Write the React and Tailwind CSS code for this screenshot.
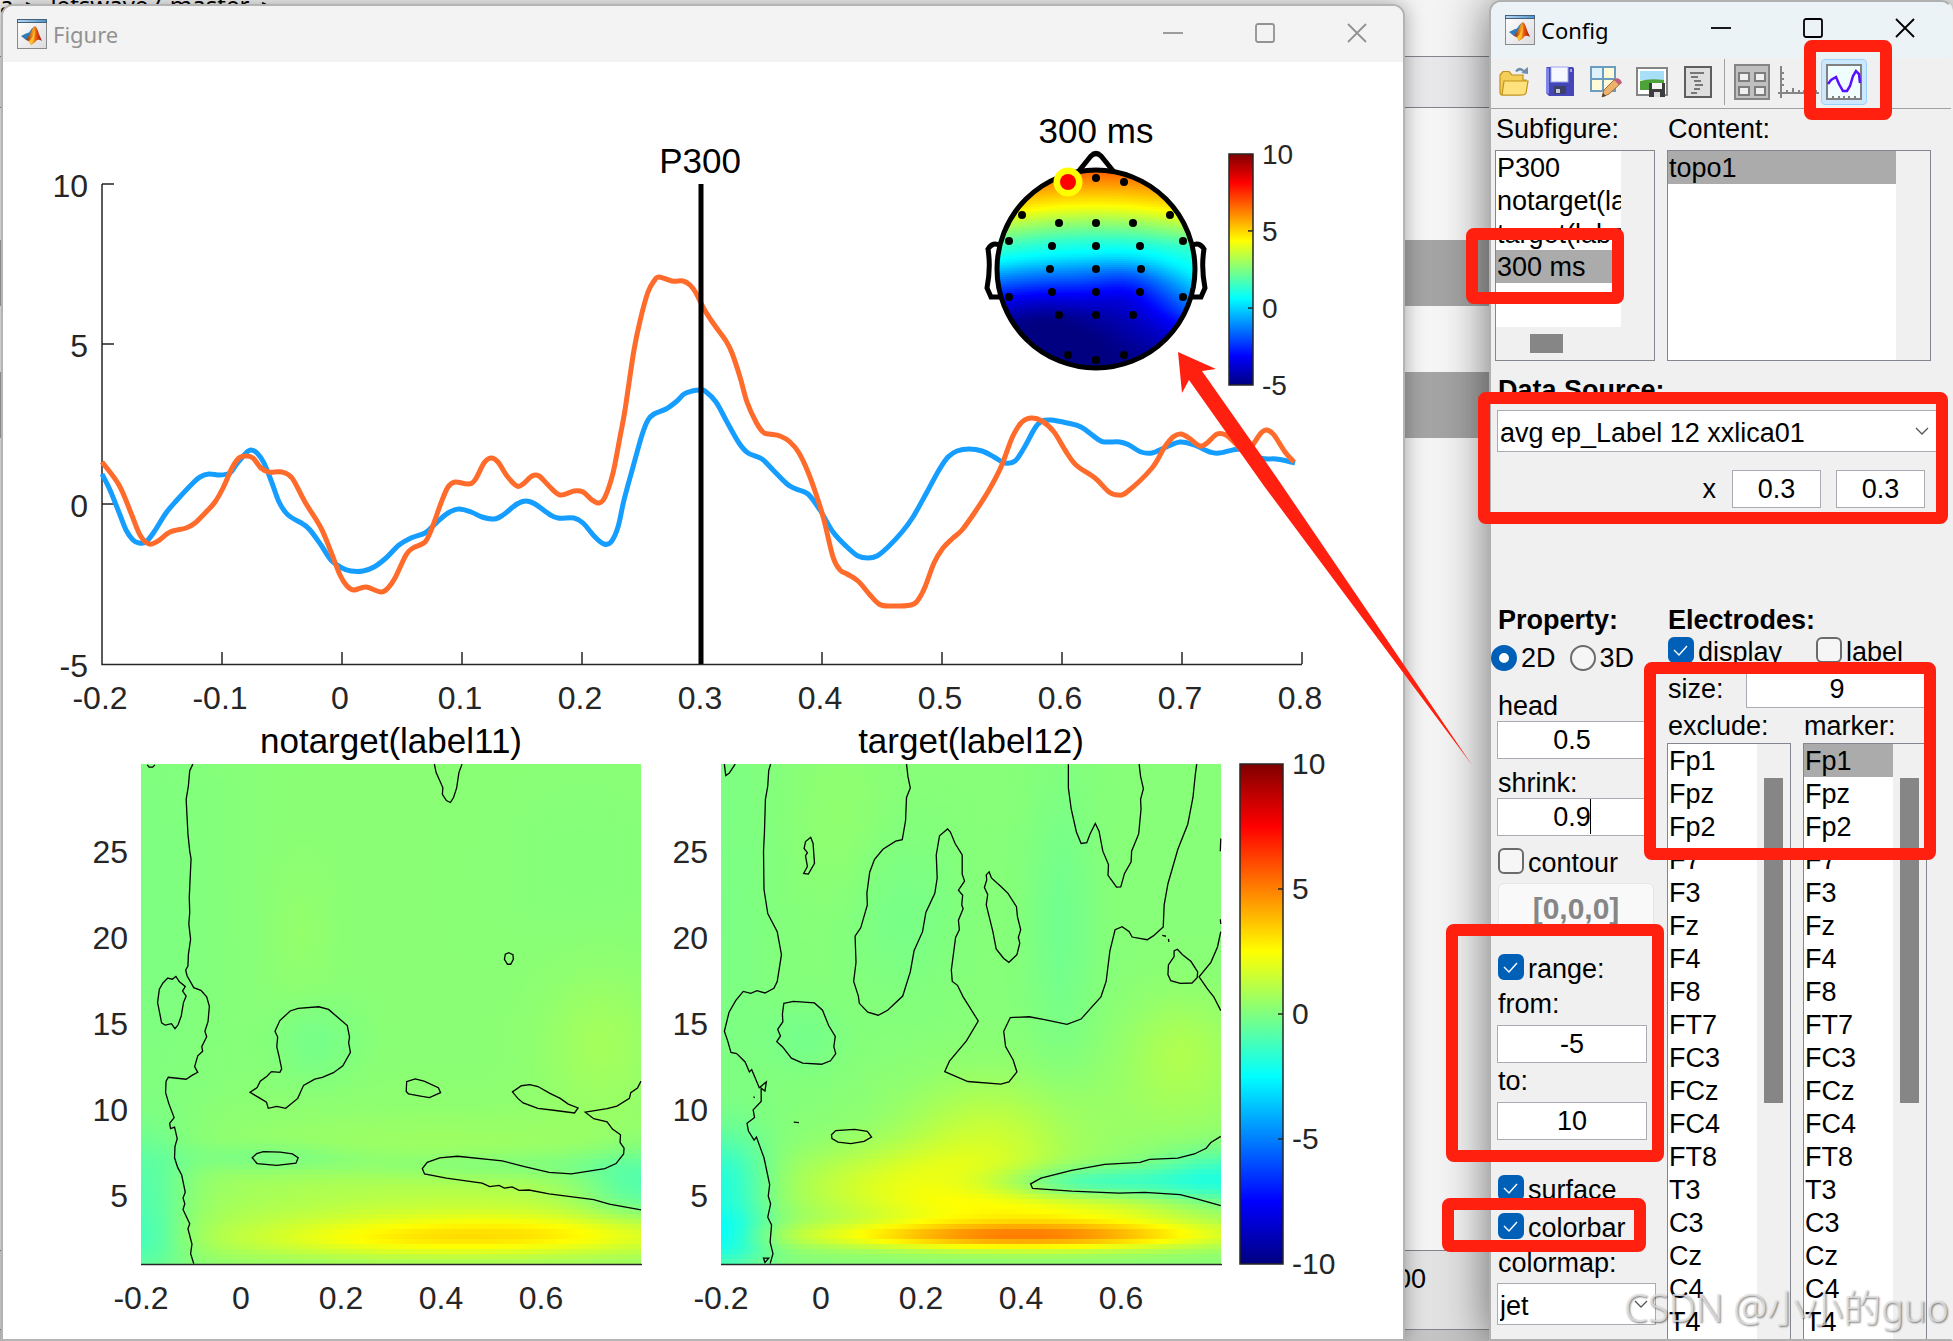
import { useState } from 'react'

const ARIAL = "'Liberation Sans', Arial, sans-serif"

const ELECTRODES = ['Fp1', 'Fpz', 'Fp2', 'F7', 'F3', 'Fz', 'F4', 'F8', 'FT7', 'FC3', 'FCz', 'FC4', 'FT8', 'T3', 'C3', 'Cz', 'C4', 'T4', 'TP7', 'CP3', 'CPz', 'CP4']

const NOTARGET_ERP = '102,474 110,490 120,515 126,530 133,540 139,543 146,542 154,532 166,513 177,500 193,483 200,477 209,474 220,475 230,473 236,465 246,453 251,450 257,453 264,463 272,483 279,502 288,515 303,524 310,530 321,545 331,560 342,568 351,571 363,571 374,567 386,558 399,545 411,538 425,533 436,523 448,513 459,509 471,512 482,517 494,519 503,515 517,504 526,501 535,504 549,514 558,518 574,518 583,523 595,537 604,544 611,542 618,527 624,500 633,467 642,435 648,420 654,414 666,409 677,401 684,394 692,391 700,390 705,391 716,402 727,422 739,443 748,453 762,459 773,470 787,484 796,489 808,494 820,510 833,532 847,547 858,556 868,558 877,556 888,547 902,532 913,517 927,492 939,470 948,457 957,451 969,449 982,451 994,457 1005,463 1015,461 1024,448 1035,428 1042,421 1051,420 1067,423 1081,427 1099,440 1106,442 1120,442 1129,445 1141,452 1152,453 1164,448 1180,442 1194,445 1210,452 1219,453 1242,449 1258,458 1276,459 1287,461 1295,463'

const TARGET_ERP = '102,462 119,485 131,513 140,535 149,544 158,541 170,532 186,528 195,523 207,511 215,502 223,488 232,468 239,458 246,456 253,458 261,468 269,472 282,472 292,478 305,502 321,528 331,552 340,575 347,586 354,590 366,587 381,592 388,588 395,578 406,555 413,548 425,542 432,528 441,503 448,487 455,482 468,484 475,480 484,463 491,458 498,462 507,476 517,486 523,484 532,476 539,476 549,486 560,495 574,491 583,492 592,500 599,503 605,497 613,473 620,437 625,410 634,350 641,317 648,292 654,281 659,277 672,281 683,281 690,285 696,293 704,309 713,323 726,341 732,353 740,377 747,402 756,422 763,432 769,434 780,436 790,442 799,453 808,472 817,497 824,520 833,557 840,570 847,574 858,581 870,595 879,604 888,606 911,605 918,600 925,587 934,563 943,548 953,538 962,530 975,512 989,490 1001,467 1012,438 1021,423 1031,418 1042,421 1054,432 1065,450 1076,465 1095,478 1109,492 1118,495 1127,492 1152,468 1164,448 1173,437 1181,434 1189,438 1200,446 1207,443 1217,434 1226,435 1235,443 1244,452 1251,447 1261,433 1267,430 1274,435 1285,452 1294,462'

// zero-level contours of the two time-frequency maps
const NOTARGET_CONTOURS = [
  'M432,63 L425,80 422,120 417,155 419,200 421,245 425,290 428,310 426,360 424,410 425,450 423,480 427,520 422,560 421,590 416,600 419,615 434,646 450,653 463,670 469,695 466,735 459,760 463,774 452,800 454,812 443,824 436,852 443,867 430,875 417,885 377,880 372,890 371,920 378,948 390,985 380,1000 382,1014 391,1010 397,1040 392,1060 391,1090 398,1115 407,1135 415,1180 410,1195 414,1210 410,1225 425,1262 421,1275 430,1315 427,1340 434,1366',
  'M330,65 L334,71 342,71 347,65',
  'M376,621 L386,624 394,617 402,631 415,643 409,655 417,668 411,685 406,720 399,743 392,753 384,740 370,744 362,738 359,720 353,685 357,650 365,634 Z',
  'M973,63 L977,85 992,124 991,142 1000,158 1009,163 1016,150 1023,125 1028,85 1035,63',
  'M1140,555 L1149,560 1150,572 1144,585 1137,585 1130,572 1132,559 Z',
  'M560,919 L576,907 583,890 598,877 608,865 627,867 631,858 625,825 620,800 622,775 616,760 627,732 650,707 668,700 714,696 736,703 778,745 783,775 781,790 785,815 768,850 747,868 722,880 705,885 680,901 667,935 640,961 620,956 601,961 597,945 580,933 Z',
  'M911,891 L930,884 950,890 982,907 987,920 962,933 942,929 915,923 910,917 Z',
  'M1148,918 L1168,902 1187,899 1205,904 1232,922 1255,935 1273,950 1295,960 1287,973 1240,966 1205,961 1172,947 1160,935 Z',
  'M565,1090 L575,1079 590,1074 628,1075 655,1080 668,1090 663,1104 620,1110 576,1105 Z',
  'M1436,890 L1428,908 1413,920 1410,935 1382,955 1360,962 1311,971 1330,988 1360,996 1372,1015 1390,1030 1389,1050 1398,1065 1397,1080 1380,1105 1355,1118 1280,1132 1230,1128 1175,1113 1125,1098 1025,1086 985,1090 957,1102 946,1118 951,1132 1000,1143 1080,1156 1097,1165 1118,1162 1130,1169 1147,1166 1163,1175 1185,1174 1230,1184 1330,1199 1365,1211 1436,1226',
]

const TARGET_CONTOURS = [
  'M94,63 L97,93 104,87 117,63',
  'M192,63 L188,80 186,120 181,155 179,240 177,290 178,390 186,453 206,500 215,560 206,630 199,648 180,660 163,654 150,661 134,656 118,680 104,710 94,760 101,785 108,815 120,818 138,840 147,866 152,860 168,907 183,892 180,916 172,908 172,943 155,965 158,985 142,1000 145,1020 157,1044 162,1036 178,1090 190,1160 187,1190 192,1210 186,1245 194,1265 191,1310 197,1340 191,1366',
  'M177,1352 L188,1352 180,1363 Z',
  'M277,254 L282,270 285,322 272,350 262,348 270,330 266,302 270,294 263,283 266,265 Z',
  'M480,63 L483,95 488,125 480,150 478,210 471,260 457,264 430,285 412,312 402,345 396,400 397,430 383,490 371,512 373,580 368,630 378,668 380,687 398,710 420,718 440,705 472,668 488,605 496,550 514,500 521,450 540,400 545,360 543,300 550,250 567,232 573,240 583,270 598,300 598,350 603,368 590,392 599,405 597,430 600,440 590,470 592,495 584,515 575,600 577,630 588,640 600,670 632,733 607,785 571,838 561,865 610,891 680,898 697,892 714,866 706,835 690,800 686,760 700,724 740,722 775,730 820,742 850,728 870,700 892,670 903,630 911,550 922,495 937,487 952,500 958,514 990,521 1003,511 1024,488 1026,430 1034,375 1055,285 1076,220 1087,150 1092,90 1095,63',
  'M655,344 L660,360 680,382 695,400 713,435 715,460 722,495 717,515 720,530 714,560 697,580 686,570 670,545 663,500 655,460 649,430 652,403 645,385 650,365 649,352 Z',
  'M823,63 L823,125 829,180 840,240 850,270 862,268 869,245 880,218 888,238 896,290 908,325 907,353 916,368 925,384 934,383 942,348 956,318 957,290 972,245 977,180 976,155 982,127 976,95 973,63',
  'M1054,546 L1065,560 1083,578 1097,605 1096,620 1085,634 1060,635 1040,628 1034,612 1035,587 1047,565 1047,550 Z',
  'M1146,500 L1139,540 1125,580 1100,618 1118,650 1131,670 1146,706',
  'M220,687 L240,682 285,686 302,705 315,745 329,773 326,800 330,818 319,837 300,846 260,843 236,830 217,800 205,787 213,772 207,755 218,735 217,715 Z',
  'M321,1030 L330,1019 370,1016 397,1021 406,1036 390,1047 362,1053 335,1049 322,1040 Z',
  'M1146,1034 L1125,1050 1115,1065 1090,1080 1055,1091 995,1094 975,1102 900,1107 830,1123 765,1143 743,1158 747,1170 830,1177 930,1182 985,1180 1060,1186 1095,1197 1146,1215',
  'M1022,510 L1030,512 M1035,519 L1036,527 M241,997 L252,998 M156,930 L158,934 M1146,257 L1145,290 M1145,468 L1146,480',
]

// gaussian bumps: [cx, cy, sx, sy, amplitude], in plot units
const NOTARGET_BUMPS = [
  [345, 473, 130, 11, 1.1], [380, 468, 190, 18, 1.3], [300, 430, 200, 46, 0.8], [220, 480, 100, 10, 0.4],
  [0, 425, 32, 40, -1.2], [0, 478, 32, 22, -1.1], [500, 425, 45, 26, -1.5], [350, 402, 110, 11, -0.7], [130, 394, 60, 10, -0.6],
  [460, 280, 40, 50, 0.5], [175, 278, 28, 28, -0.4], [160, 170, 20, 50, 0.2], [0, 150, 60, 200, -0.25], [440, 100, 60, 60, -0.1],
]

const TARGET_BUMPS = [
  [295, 472, 135, 9, 3.6], [340, 453, 115, 20, 2], [190, 420, 85, 26, 1.6], [265, 375, 60, 40, 1.2],
  [0, 420, 32, 34, -2], [0, 475, 32, 20, -2.2], [500, 415, 45, 20, -1.8], [370, 419, 75, 11, -1.9],
  [460, 285, 38, 38, 0.7], [340, 160, 22, 100, -0.45], [180, 150, 40, 60, -0.3], [85, 275, 26, 24, -0.35],
  [120, 60, 30, 60, 0.2], [0, 150, 40, 200, -0.25], [450, 350, 80, 40, 0.3],
]

const HEAD_DOTS = [
  [1096, 178], [1124, 182], [1022, 215], [1170, 215], [1059, 223], [1096, 223], [1133, 223], [1009, 241], [1183, 241],
  [1052, 246], [1096, 246], [1140, 246], [1050, 269], [1096, 269], [1141, 269], [1052, 292], [1096, 292], [1140, 292],
  [1009, 297], [1183, 297], [1059, 315], [1096, 315], [1133, 315], [1068, 355], [1096, 360], [1124, 355],
]

const clamp = (v) => Math.max(0, Math.min(1, v))

function jet(t) {
  const s = clamp(t) * 4
  const [r, g, b] = [3, 2, 1].map((c) => Math.round(255 * clamp(1.5 - Math.abs(s - c))))
  return `rgb(${r},${g},${b})`
}

const bumpSum = (bumps, x, y) =>
  bumps.reduce((sum, [cx, cy, sx, sy, a]) => sum + a * Math.exp(-((x - cx) ** 2) / (2 * sx * sx) - ((y - cy) ** 2) / (2 * sy * sy)), 0)

const notargetField = (x, y) => (10.2 + bumpSum(NOTARGET_BUMPS, x, y)) / 20
const targetField = (x, y) => (10.15 + bumpSum(TARGET_BUMPS, x, y)) / 20

const HEAD_PROFILE = [[0, 0.8], [16, 0.73], [36, 0.64], [54, 0.53], [72, 0.43], [89, 0.36], [104, 0.27], [120, 0.19], [134, 0.13], [150, 0.08], [175, 0.03], [205, 0], [240, 0]]
const HEAD_BUMPS = [[132, 118, 24, 20, -0.05], [50, 155, 45, 28, -0.07]]

function headField(x, y) {
  const dx = (x - 100) / 100
  const bend = 10 + 24 * clamp((y - 80) / 60) * (dx > 0 ? 1 : -0.3)
  const yy = Math.max(0, y - bend * dx * dx + 2)
  const i = Math.max(1, HEAD_PROFILE.findIndex(([py]) => py >= yy))
  const [y0, v0] = HEAD_PROFILE[i - 1]
  const [y1, v1] = HEAD_PROFILE[i]
  return v0 + ((v1 - v0) * (yy - y0)) / (y1 - y0) + bumpSum(HEAD_BUMPS, x, y)
}

// smooth path through the sample points
function curve(points) {
  const p = points.split(' ').map((s) => s.split(',').map(Number))
  let d = `M${p[0]}`
  for (let i = 0; i < p.length - 1; i++) {
    const [a, b, c, e] = [p[i - 1] || p[i], p[i], p[i + 1], p[i + 2] || p[i + 1]]
    d += ` C${b[0] + (c[0] - a[0]) / 6},${b[1] + (c[1] - a[1]) / 6} ${c[0] - (e[0] - b[0]) / 6},${c[1] - (e[1] - b[1]) / 6} ${c}`
  }
  return d
}

function FieldMap({ id, x, y, width, height, rowHeight, field, clipPath }) {
  const rows = Array.from({ length: Math.ceil(height / rowHeight) }, (_, i) => i)
  const stops = Array.from({ length: 26 }, (_, i) => i / 25)
  return (
    <g clipPath={clipPath} shapeRendering="crispEdges">
      {rows.map((row) => (
        <g key={row}>
          <linearGradient id={`${id}-${row}`}>
            {stops.map((s) => (
              <stop key={s} offset={s} stopColor={jet(field(s * width, (row + 0.5) * rowHeight))} />
            ))}
          </linearGradient>
          <rect x={x} y={y + row * rowHeight} width={width} height={rowHeight} fill={`url(#${id}-${row})`} />
        </g>
      ))}
    </g>
  )
}

function Colorbar({ x, y, width, height, ticks, fontSize }) {
  return (
    <g>
      <rect x={x} y={y} width={width} height={height} fill="url(#jet)" stroke="#262626" strokeWidth="1.5" />
      {ticks.map(([label, f]) => (
        <g key={label}>
          {f > 0 && f < 1 && <path d={`M${x + width - 5},${y + f * height}h5`} stroke="#262626" strokeWidth="1.5" />}
          <text x={x + width + 9} y={y + f * height + 10} fontSize={fontSize} fill="#262626">{label}</text>
        </g>
      ))}
    </g>
  )
}

function TimeFrequency({ id, x, title, field, contours, contourTransform }) {
  return (
    <g>
      <text x={x + 250} y="753" fontSize="35" textAnchor="middle">{title}</text>
      <FieldMap id={id} x={x} y={764} width={500} height={500} rowHeight={5} field={field} />
      <g transform={contourTransform} fill="none" stroke="#000" strokeWidth="1.3">
        {contours.map((d) => <path key={d} d={d} vectorEffect="non-scaling-stroke" />)}
      </g>
      <path d={`M${x},1264.5h501`} stroke="#262626" strokeWidth="1.5" />
      <g fontSize="32" fill="#262626">
        {[25, 20, 15, 10, 5].map((hz, i) => (
          <text key={hz} x={x - 13} y={863 + i * 86} textAnchor="end">{hz}</text>
        ))}
        {['-0.2', '0', '0.2', '0.4', '0.6'].map((t, i) => (
          <text key={t} x={x + i * 100} y="1309" textAnchor="middle">{t}</text>
        ))}
      </g>
    </g>
  )
}

function Topography() {
  const ear = 'M1000,246 Q993,241 988,249 Q991,268 987,288 L991,297 L1000,297'
  return (
    <g>
      <text x="1096" y="143" fontSize="35" textAnchor="middle">300 ms</text>
      <clipPath id="scalp"><circle cx="1096" cy="269" r="99" /></clipPath>
      <FieldMap id="topo" x={996} y={169} width={200} height={202} rowHeight={2} field={headField} clipPath="url(#scalp)" />
      <g fill="none" stroke="#000" strokeWidth="5">
        <circle cx="1096" cy="269" r="99" />
        <path d="M1078,172 L1091,156 Q1096,151 1101,156 L1114,172" />
        <path d={ear} />
        <path d={ear} transform="translate(2192 0) scale(-1 1)" />
      </g>
      {HEAD_DOTS.map(([cx, cy]) => <circle key={`${cx}-${cy}`} cx={cx} cy={cy} r="4" />)}
      <circle cx="1068" cy="182" r="14.5" fill="#ff0" />
      <circle cx="1068" cy="182" r="8" fill="#f00" />
    </g>
  )
}

function FigurePlots() {
  return (
    <svg viewBox="3 62 1400 1279" className="relative z-10 block w-full overflow-visible" fontFamily={ARIAL}>
      <linearGradient id="jet" x1="0" y1="1" x2="0" y2="0">
        {[0, 0.125, 0.375, 0.625, 0.875, 1].map((t) => <stop key={t} offset={t} stopColor={jet(t)} />)}
      </linearGradient>

      {/* ERP axes */}
      <path
        d={`M102,184V664.5H1302 M102,184h12 M102,344h12 M102,504h12 ${Array.from({ length: 10 }, (_, i) => `M${222 + i * 120},664v-12`).join(' ')}`}
        fill="none" stroke="#262626" strokeWidth="1.5"
      />
      <g fontSize="32" fill="#262626">
        {['10', '5', '0', '-5'].map((v, i) => (
          <text key={v} x="88" y={197 + i * 160} textAnchor="end">{v}</text>
        ))}
        {['-0.2', '-0.1', '0', '0.1', '0.2', '0.3', '0.4', '0.5', '0.6', '0.7', '0.8'].map((t, i) => (
          <text key={t} x={100 + i * 120} y="709" textAnchor="middle">{t}</text>
        ))}
      </g>
      <g fill="none" strokeWidth="5" strokeLinejoin="round">
        <path d={curve(NOTARGET_ERP)} stroke="#159dff" />
        <path d={curve(TARGET_ERP)} stroke="#ff6b2b" />
        <path d="M701,184V664" stroke="#000" />
      </g>
      <text x="700" y="173" fontSize="35" textAnchor="middle">P300</text>

      <Topography />
      <Colorbar x={1229} y={154} width={24} height={231} fontSize={28} ticks={[['10', 0], ['5', 0.333], ['0', 0.667], ['-5', 1]]} />

      <TimeFrequency id="notarget" x={141} title="notarget(label11)" field={notargetField}
        contours={NOTARGET_CONTOURS} contourTransform="matrix(0.4464 0 0 0.3833 0 740)" />
      <TimeFrequency id="target" x={721} title="target(label12)" field={targetField}
        contours={TARGET_CONTOURS} contourTransform="matrix(0.4719 0 0 0.3833 680 740)" />
      <Colorbar x={1240} y={764} width={43} height={500} fontSize={30} ticks={[['10', 0], ['5', 0.25], ['0', 0.5], ['-5', 0.75], ['-10', 1]]} />

      <path d="M1178,352 L1216,369 L1202,371 L1277,478 L1472,765 L1264,486 L1189,380 L1182,393 Z" fill="#ff2010" />
    </svg>
  )
}

function MatlabIcon() {
  return (
    <svg viewBox="0 0 30 30" className="size-[30px] shrink-0">
      <defs>
        <linearGradient id="mlPage" x2="1" y2="1"><stop offset="0" stopColor="#fff" /><stop offset="1" stopColor="#dcdce0" /></linearGradient>
        <linearGradient id="mlBar"><stop offset="0" stopColor="#b9d9f2" /><stop offset="1" stopColor="#4f93cc" /></linearGradient>
        <linearGradient id="mlPeak"><stop offset="0" stopColor="#8d1b10" /><stop offset=".45" stopColor="#f4a01f" /><stop offset=".7" stopColor="#e0420f" /><stop offset="1" stopColor="#9c1d0c" /></linearGradient>
      </defs>
      <rect x=".5" y=".5" width="29" height="29" fill="url(#mlPage)" stroke="#8a8a8a" />
      <rect x=".5" y=".5" width="29" height="3" fill="url(#mlBar)" stroke="#44617c" />
      <path d="M4 17 L9 14.500 L12 13.500 Q15 9 17 7.500 L14 17 L9 21 Z" fill="#2f7cb8" />
      <path d="M9 21 Q12 17 14 13 Q16 8 18 7 Q20 8 22 15 L25 22 Q22 20 20 21 Q17 25 14 26 Q13 22 9 21 Z" fill="url(#mlPeak)" />
      <path d="M12 22 Q16 20 18 9 Q18 19 15 25 L14 26 Z" fill="#ffc02e" />
    </svg>
  )
}

function WindowButtons({ stroke }) {
  const shapes = [
    ['Minimize', <path key="m" d="M0 10H20" />],
    ['Maximize', <rect key="r" x="1" y="1" width="18" height="18" rx="2" />],
    ['Close', <path key="c" d="M1 1L19 19M19 1L1 19" />],
  ]
  return (
    <div className="ml-auto flex h-full pb-0.5">
      {shapes.map(([label, shape]) => (
        <button key={label} aria-label={label} className="flex h-full w-[92px] items-center justify-center">
          <svg viewBox="0 0 20 20" className="size-5" fill="none" stroke={stroke} strokeWidth="1.8">{shape}</svg>
        </button>
      ))}
    </div>
  )
}

const TOOLS = {
  open: (
    <svg viewBox="0 0 32 32" className="size-8">
      <path d="M17 5 Q21 -1 26 4 L30 1 V8 L23 7 L25 6 Q22 3 19 6 Z" fill="#6f8fae" />
      <path d="M2 9 L5 5.500 H11 L14 9 H25 V14 H28 L26 27 Q25 29 22 29 H4 Q2 29 2 26 Z" fill="#f3cf58" stroke="#c2921c" strokeWidth="1.200" />
      <path d="M6 15 H30 L28 27 Q27 29 24 29 H4 Z" fill="#ffe27d" stroke="#c2921c" strokeWidth="1.200" />
    </svg>
  ),
  save: (
    <svg viewBox="0 0 32 32" className="size-8">
      <path d="M3 1 H28 Q30 1 30 3 V30 H5 L2 27 V2 Z" fill="#4345b8" />
      <path d="M2 2 H5 V28 L2 27 Z" fill="#7d85e6" />
      <rect x="7" y="1" width="17" height="15" fill="#f6f8ff" stroke="#9fa6ea" />
      <rect x="10" y="20" width="12" height="8" fill="#3c3f66" />
      <path d="M12 23 H16 V27 H12 Z" fill="#c9cbd3" />
      <rect x="26" y="3" width="2" height="3" fill="#9fa6ea" />
    </svg>
  ),
  edit: (
    <svg viewBox="0 0 32 32" className="size-8">
      <rect x="1" y="1" width="24" height="24" fill="#fffbd8" stroke="#6c9cc0" strokeWidth="2" />
      <path d="M2 2 H13 V13 H2 Z" fill="#dff1fb" />
      <path d="M13 1 V25 M1 13 H25" stroke="#6c9cc0" strokeWidth="2" />
      <path d="M12 31 L14 24 L25 13 L30 18 L19 28 Z" fill="#edb36c" stroke="#a46a33" />
      <path d="M24 14 L27 12 Q31 13 32 17 L29 19 Z" fill="#bf5f80" />
      <path d="M12 31 L13 27 L16 30 Z" fill="#444" />
    </svg>
  ),
  export: (
    <svg viewBox="0 0 32 32" className="size-8">
      <rect x="1" y="2" width="30" height="27" fill="#fff" stroke="#858585" strokeWidth="2" />
      <rect x="4" y="5" width="24" height="9" fill="#a8def8" />
      <path d="M4 15 Q14 12 28 14 V24 H4 Z" fill="#4da23a" />
      <rect x="13" y="17" width="16" height="14" fill="#3d3d3d" />
      <rect x="16" y="17" width="10" height="6" fill="#f4f4f4" />
      <rect x="18" y="26" width="6" height="5" fill="#dcdcdc" />
    </svg>
  ),
  script: (
    <svg viewBox="0 0 32 32" className="size-8">
      <rect x="3" y="1" width="26" height="30" fill="#dedede" stroke="#5e5e5e" strokeWidth="2" />
      <path d="M8 7H22 M9 11H16 M12 15H19 M13 19H21 M12 23H18 M9 27H15" stroke="#777" strokeWidth="2.200" />
    </svg>
  ),
  grid: (
    <svg viewBox="0 0 36 36" className="size-9">
      <rect x="1" y="1" width="34" height="34" fill="#c0c0c0" stroke="#858585" strokeWidth="2" />
      <g fill="#f0f0f0" stroke="#7d7d7d" strokeWidth="2">
        <path d="M5 9h10v8h-10z M21 9h10v8h-10z M5 23h10v8h-10z M21 23h10v8h-10z" />
      </g>
    </svg>
  ),
  axes: (
    <svg viewBox="0 0 42 36" className="h-9 w-[42px]" fill="none" stroke="#858585" strokeWidth="2">
      <path d="M4 2V34 M1 29H42 M4 9h3 M4 15h3 M4 21h3 M10 26v3 M16 24v5 M22 26v3 M27 26v3 M33 26v3 M39 26v3" />
    </svg>
  ),
  wave: (
    <svg viewBox="0 0 36 36" className="size-9">
      <rect x="1" y="1" width="34" height="34" fill="#effdff" stroke="#808080" strokeWidth="2" />
      <path d="M7 32v3 M13 32v3 M18 32v3 M23 32v3 M29 32v3" stroke="#808080" strokeWidth="2" />
      <path d="M2 20 L5 16 L10 13 L13 20 L17 27 H21 L24 22 L27 12 L30 7 L33 10 L34 19" fill="none" stroke="#5a10ff" strokeWidth="2.500" />
    </svg>
  ),
}

function Tool({ name, active }) {
  return (
    <button aria-label={name}
      className={`flex h-[46px] w-[46px] shrink-0 items-center justify-center rounded-sm ${active ? 'border border-[#99d1ff] bg-[#cce8ff]' : ''}`}>
      {TOOLS[name]}
    </button>
  )
}

const inputCls = 'block h-[38px] w-full rounded-none border border-[#ababb3] bg-white text-center text-[27px] leading-8'
const markCls = 'size-[26px] shrink-0 appearance-none border-2 border-[#6b6b6b] bg-[#f6f6f6]'

function Check({ label, checked, onChange }) {
  return (
    <label className="flex h-7 items-center gap-1">
      <span className="relative flex">
        <input type="checkbox" checked={checked} onChange={onChange}
          className={`${markCls} rounded-md checked:border-[#0060b8] checked:bg-[#0060b8]`} />
        {checked && (
          <svg viewBox="0 0 26 26" className="pointer-events-none absolute inset-0" fill="none" stroke="#fff" strokeWidth="1.4">
            <path d="M6 13 L11 18 L19 9" />
          </svg>
        )}
      </span>
      <span className="pt-1 leading-7">{label}</span>
    </label>
  )
}

function Radio({ label, checked, onChange }) {
  return (
    <label className="flex h-8 items-center gap-1">
      <input type="radio" name="dimension" checked={checked} onChange={onChange}
        className={`${markCls} rounded-full checked:border-8 checked:border-[#0060b8] checked:bg-white`} />
      <span className="leading-8">{label}</span>
    </label>
  )
}

function Select({ label, options, className }) {
  return (
    <div className={`relative ${className}`}>
      <select aria-label={label} className="block h-[42px] w-full appearance-none rounded-none border border-[#ababb3] bg-white pt-1 pl-0.5 text-[27px] leading-8">
        {options.map((o) => <option key={o}>{o}</option>)}
      </select>
      <svg viewBox="0 0 14 8" className="pointer-events-none absolute top-[17px] right-2 h-2 w-[14px]" fill="none" stroke="#555" strokeWidth="1.300">
        <path d="M1 1L7 7L13 1" />
      </svg>
    </div>
  )
}

function ListBox({ label, items, selected, gutter, className, children }) {
  return (
    <div className={`relative flex overflow-hidden border border-[#828790] ${className}`}>
      <ul role="listbox" aria-label={label} className="min-w-0 flex-1 overflow-hidden bg-white whitespace-nowrap">
        {items.map((item) => (
          <li key={item} role="option" aria-selected={item === selected}
            className={`h-[33px] pl-px leading-[35px] ${item === selected ? 'bg-[#ababab]' : ''}`}>
            {item}
          </li>
        ))}
      </ul>
      <div className={`shrink-0 ${gutter}`}>{children}</div>
    </div>
  )
}

// red frame laid over a group of controls
function Highlight({ className }) {
  return <div className={`pointer-events-none absolute z-20 rounded-lg border-12 border-[#ff2010] ${className}`} />
}

function ConfigWindow() {
  const [flags, setFlags] = useState({ display: true, label: false, contour: false, range: true, surface: true, colorbar: true })
  const [mode, setMode] = useState('2D')

  const check = (name, text = name) => (
    <Check label={text} checked={flags[name]} onChange={() => setFlags({ ...flags, [name]: !flags[name] })} />
  )

  return (
    <section className="relative flex w-[464px] shrink-0 flex-col rounded-t-xl border-2 border-[#b0b0b0] border-r-transparent bg-[#f0f0f0] shadow-[0_0_48px_rgba(0,0,0,0.55)]">
      <header className="flex h-14 shrink-0 items-center rounded-t-[10px] bg-[#ebf3f7] pl-3.5">
        <MatlabIcon />
        <h1 className="pl-1.5 font-['Noto_Sans'] text-[22px]">Config</h1>
        <div className="ml-auto h-full pb-0.5"><WindowButtons stroke="#000" /></div>
      </header>

      <div className="flex h-[51px] shrink-0 items-center border-b border-[#a0a0a0] pb-0.5">
        {['open', 'save', 'edit', 'export', 'script'].map((name) => <Tool key={name} name={name} />)}
        <span className="mr-1 ml-[3px] h-[46px] w-px bg-[#a0a0a0]" />
        {['grid', 'axes', 'wave'].map((name) => <Tool key={name} name={name} active={name === 'wave'} />)}
      </div>

      <div className="flex min-h-0 flex-1 flex-col pt-1 text-[27px] leading-8">
        <div className="grid grid-cols-[160px_264px] gap-x-3 pl-1">
          <div>
            <h2 className="mb-[5px] pl-px">Subfigure:</h2>
            <ListBox label="Subfigure" items={['P300', 'notarget(label11)', 'target(label12)', '300 ms']} selected="300 ms"
              gutter="w-[33px]" className="h-[211px] pb-[33px]">
              <span className="absolute bottom-[7px] left-[34px] h-[19px] w-[33px] bg-[#868686]" />
            </ListBox>
          </div>
          <div>
            <h2 className="mb-[5px] pl-px">Content:</h2>
            <ListBox label="Content" items={['topo1']} selected="topo1" gutter="w-[34px]" className="h-[211px]" />
          </div>
        </div>

        <h2 className="mt-[13px] pl-[7px] font-bold">Data Source:</h2>
        <Select label="Data source" options={['avg ep_Label 12 xxlica01']} className="mt-1 mr-3.5 ml-1.5" />
        <div className="mt-[18px] mr-[26px] flex items-center justify-end">
          <label htmlFor="x-from" className="mr-4">x</label>
          <input id="x-from" defaultValue="0.3" className={`${inputCls} max-w-[89px]`} />
          <input aria-label="x to" defaultValue="0.3" className={`${inputCls} ml-[15px] max-w-[89px]`} />
        </div>

        <div className="mt-24 flex min-h-0 flex-1">
          <div className="w-[177px] shrink-0 pl-1.5">
            <h2 className="pl-px font-bold">Property:</h2>
            <div className="mt-1.5 -ml-1.5 flex gap-3.5">
              <Radio label="2D" checked={mode === '2D'} onChange={() => setMode('2D')} />
              <Radio label="3D" checked={mode === '3D'} onChange={() => setMode('3D')} />
            </div>
            <label htmlFor="head" className="mt-[18px] block pl-px leading-7">head</label>
            <div className="mt-px w-[150px]"><input id="head" defaultValue="0.5" className={inputCls} /></div>
            <label htmlFor="shrink" className="mt-2.5 block pl-px leading-7">shrink:</label>
            <div className="relative mt-px w-[150px]">
              <input id="shrink" defaultValue="0.9" className={inputCls} />
              <span className="absolute top-px left-[93px] h-[35px] w-px bg-black" />
            </div>
            <div className="mt-[11px] pl-px">{check('contour')}</div>
            <button disabled className="mt-2 ml-px block h-12 w-[156px] rounded-md border border-[#e6e6e6] bg-[#f9f9f9] pt-1 text-[30px] font-bold text-[#868686]">
              [0,0,0]
            </button>
            <div className="mt-[22px] pl-px">{check('range', 'range:')}</div>
            <label htmlFor="from" className="mt-[9px] block pl-px leading-7">from:</label>
            <div className="mt-[7px] w-[150px]"><input id="from" defaultValue="-5" className={inputCls} /></div>
            <label htmlFor="to" className="mt-1 block pl-px leading-7">to:</label>
            <div className="mt-[7px] w-[150px]"><input id="to" defaultValue="10" className={inputCls} /></div>
            <div className="mt-[34px] pl-px">{check('surface')}</div>
            <div className="mt-2.5 pl-px">{check('colorbar')}</div>
            <p className="mt-[9px] pl-px leading-7">colormap:</p>
            <Select label="Colormap" options={['jet']} className="mt-1.5 w-[159px]" />
          </div>

          <div className="flex min-h-0 w-[260px] shrink-0 flex-col">
            <h2 className="font-bold">Electrodes:</h2>
            <div className="flex gap-[34px]">
              {check('display')}
              {check('label')}
            </div>
            <div className="mt-[6px] flex items-center">
              <label htmlFor="size" className="w-[78px] shrink-0">size:</label>
              <input id="size" defaultValue="9" className={inputCls} />
            </div>
            <div className="mt-0.5 flex leading-8">
              <span className="w-[136px]">exclude:</span>
              <span>marker:</span>
            </div>
            <div className="mt-px -ml-px flex min-h-0 flex-1 gap-3">
              {[['exclude', null], ['marker', 'Fp1']].map(([name, selected]) => (
                <ListBox key={name} label={name} items={ELECTRODES} selected={selected} gutter="w-[33px] px-[7px] pt-[34px]" className="w-[124px] border-b-0">
                  <div className="h-[325px] bg-[#868686]" />
                </ListBox>
              ))}
            </div>
          </div>
        </div>
      </div>

      <Highlight className="top-[38px] left-[313px] h-20 w-[88px]" />
      <Highlight className="top-[226px] -left-[25px] h-[76px] w-[158px]" />
      <Highlight className="top-[390px] -left-[13px] h-[132px] w-[470px]" />
      <Highlight className="top-[660px] left-[153px] h-[198px] w-[292px]" />
      <Highlight className="top-[922px] -left-[45px] h-[238px] w-[218px]" />
      <Highlight className="top-[1196px] -left-[49px] h-[54px] w-[204px]" />
    </section>
  )
}

function FigureWindow() {
  return (
    <section className="mt-1 mr-[84px] ml-px flex min-w-0 flex-1 flex-col rounded-t-xl border-2 border-[#b4b4b4] bg-white shadow-[0_0_20px_rgba(0,0,0,0.35)]">
      <header className="flex h-14 shrink-0 items-center rounded-t-[10px] bg-[#f3f3f3] pl-3.5">
        <MatlabIcon />
        <h1 className="pl-1.5 font-['Noto_Sans'] text-[22px] text-[#929292]">Figure</h1>
        <WindowButtons stroke="#929292" />
      </header>
      <FigurePlots />
    </section>
  )
}

// slices of the windows that lie behind the two figures
function Backdrop() {
  return (
    <div className="absolute inset-0 flex flex-col bg-[#c4c4c4]">
      <div className="h-14 overflow-hidden bg-[#f4f4f4] font-['Noto_Sans'] text-[24px] leading-[10px] whitespace-pre">a  ▸  letswave7-master  ▸</div>
      <div className="h-[52px] border-y border-[#84848c] bg-[#e8e8ea]" />
      <div className="h-[132px] bg-[#f6f6f6]" />
      <div className="h-[66px] bg-[#a4a4a4]" />
      <div className="h-[66px] bg-[#f6f6f6]" />
      <div className="h-[66px] bg-[#a4a4a4]" />
      <div className="h-[812px] bg-[#f4f4f4]" />
      <div className="flex h-20 justify-end border-y border-[#84848c] bg-[#e2e2e2] pt-3 pr-[527px] text-[27px] leading-8">500</div>
    </div>
  )
}

function App() {
  return (
    <main className="relative h-screen overflow-hidden text-black" style={{ fontFamily: ARIAL }}>
      <Backdrop />
      <div className="relative flex h-full">
        <FigureWindow />
        <ConfigWindow />
      </div>
      <p className="pointer-events-none absolute right-1 bottom-2.5 z-30 font-['Noto_Sans','Noto_Sans_CJK_SC',sans-serif] text-[38px] leading-[48px] font-light text-[#e4e4e4]/80 [text-shadow:1px_1px_2px_rgba(0,0,0,0.55)]">
        CSDN @小小的guo
      </p>
    </main>
  )
}

export default App
